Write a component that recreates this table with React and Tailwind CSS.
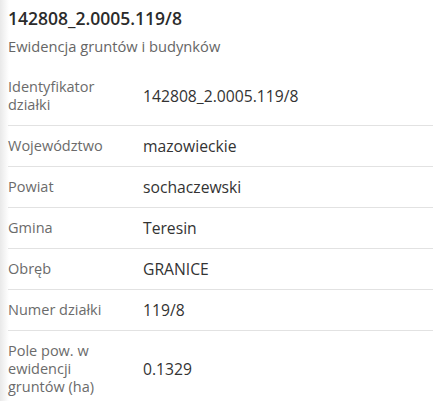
export default function App() {
  const rows = [
    ["Identyfikator działki", "142808_2.0005.119/8"],
    ["Województwo", "mazowieckie"],
    ["Powiat", "sochaczewski"],
    ["Gmina", "Teresin"],
    ["Obręb", "GRANICE"],
    ["Numer działki", "119/8"],
    ["Pole pow. w ewidencji gruntów (ha)", "0.1329"],
  ];
  return (
    <div
      className="w-[438px] h-[401px] overflow-hidden bg-[linear-gradient(to_right,#e9e9e9,#ffffff_9px)] text-[#333]"
      style={{ fontFamily: '"Open Sans", "Noto Sans", sans-serif' }}
    >
      <div className="pl-[8px] pr-[5px]">
        <div className="pt-[6px] h-[31px] text-[17.5px] leading-[24px] font-semibold text-[#2b2b2b]">
          142808_2.0005.119/8
        </div>
        <div className="h-[36px] pt-[3px] text-[14.7px] leading-[24px] text-[#666]">
          Ewidencja gruntów i budynków
        </div>
        {rows.map(([k, v], i) => (
          <div
            key={i}
            className={`flex items-center py-[11px] ${i < rows.length - 1 ? "border-b border-[#e2e2e2]" : ""}`}
          >
            <div className="w-[135px] shrink-0">
              <div className="w-[110px] text-[14.5px] leading-[18px] text-[#6b6b6b]">{k}</div>
            </div>
            <div className="text-[15.7px] leading-[18px] text-[#333]">{v}</div>
          </div>
        ))}
      </div>
    </div>
  );
}
